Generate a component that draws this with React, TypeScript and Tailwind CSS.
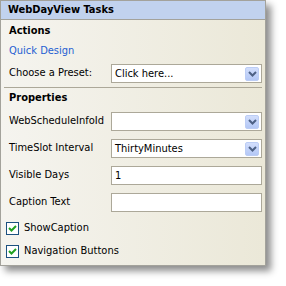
const font = "font-['DejaVu_Sans_Condensed','Liberation_Sans',sans-serif] text-[11px]";

function Chevron() {
  return (
    <span className="flex h-[14px] w-[14px] items-center justify-center rounded-[2px] border border-[#bccdf5] bg-gradient-to-b from-[#d2defc] to-[#b4c8f6]">
      <svg width="9" height="6" viewBox="0 0 9 6">
        <path d="M1 1 L4.5 4.5 L8 1" fill="none" stroke="#4d6185" strokeWidth="2" />
      </svg>
    </span>
  );
}

function Field({ value = "", select = false }: { value?: string; select?: boolean }) {
  return (
    <div className="flex h-[19px] w-[151px] items-center justify-between border border-[#aca899] bg-white pl-[3px] pr-[2px] text-black">
      <span className="leading-none">{value}</span>
      {select && <Chevron />}
    </div>
  );
}

function Row({ label, value, select }: { label: string; value?: string; select?: boolean }) {
  return (
    <div className="flex h-[19px] items-center justify-between pl-[8px] pr-[3px]">
      <span className="text-black">{label}</span>
      <Field value={value} select={select} />
    </div>
  );
}

function Check({ label }: { label: string }) {
  return (
    <div className="flex h-[13px] items-center gap-[5px] pl-[5px]">
      <span className="flex h-[13px] w-[13px] items-center justify-center border border-[#1c5180] bg-white">
        <svg width="9" height="9" viewBox="0 0 9 9">
          <path d="M1 4 L3.5 6.5 L8 2" fill="none" stroke="#21a121" strokeWidth="2" />
        </svg>
      </span>
      <span className="text-black">{label}</span>
    </div>
  );
}

export default function App() {
  return (
    <div className="h-[286px] w-[286px] bg-white">
      <div
        className={`flex h-[266px] w-[266px] flex-col border border-[#a3a29b] bg-gradient-to-r from-[#f5f4ef] to-[#ebe8d8] shadow-[5px_5px_7px_rgba(0,0,0,0.45)] ${font}`}
      >
        <div className="flex h-[19px] shrink-0 items-center border-b border-[#a3a29b] bg-[#c1d2ee] pl-[7px] font-bold text-black">
          WebDayView Tasks
        </div>
        <div className="mt-[4px] pl-[8px] font-bold leading-[14px] text-black">Actions</div>
        <div className="mt-[6px] pl-[8px] leading-[14px] text-[#1f5fd2]">Quick Design</div>
        <div className="mt-[6px]">
          <Row label="Choose a Preset:" value="Click here..." select />
        </div>
        <div className="mx-[3px] mt-[4px] border-t border-[#aca899]" />
        <div className="mt-[3px] pl-[8px] font-bold leading-[14px] text-black">Properties</div>
        <div className="mt-[7px] flex flex-col gap-[8px]">
          <Row label="WebScheduleInfoId" select />
          <Row label="TimeSlot Interval" value="ThirtyMinutes" select />
          <Row label="Visible Days" value="1" />
          <Row label="Caption Text" />
        </div>
        <div className="mt-[10px] flex flex-col gap-[10px]">
          <Check label="ShowCaption" />
          <Check label="Navigation Buttons" />
        </div>
      </div>
    </div>
  );
}
